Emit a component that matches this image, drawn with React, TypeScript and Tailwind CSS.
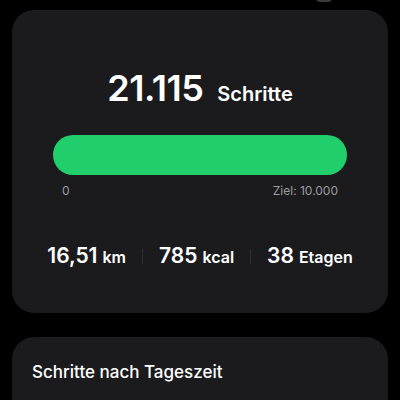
export default function App() {
  return (
    <div
      className="w-[400px] h-[400px] overflow-hidden bg-black px-3 relative"
      style={{ fontFamily: 'Inter, "Noto Sans", sans-serif' }}
    >
      {/* remnant of element above, cut off */}
      <div className="absolute top-[-6px] left-[316px] w-[16px] h-[8px] rounded-full bg-[#3a3a3e]" />

      {/* Steps card */}
      <div className="mt-[10px] h-[303px] rounded-[22px] bg-[#1b1b1e] flex flex-col">
        <div className="mt-[60px] flex items-baseline justify-center gap-[14px] text-white">
          <span className="text-[36px] leading-[36px] font-semibold tracking-[-0.5px]">21.115</span>
          <span className="text-[20px] leading-[24px] font-semibold">Schritte</span>
        </div>

        <div className="mx-[41px] mt-[29px] h-[40px] rounded-full bg-[#20cf6c]" />
        <div className="mx-[50px] mt-[9px] flex justify-between text-[12px] leading-[14px] text-[#9b9b9f]">
          <span>0</span>
          <span>Ziel: 10.000</span>
        </div>

        <div className="mt-[46px] flex items-center justify-center text-white">
          <div className="flex items-baseline gap-[5px]">
            <span className="text-[21px] leading-[24px] font-semibold">16,51</span>
            <span className="text-[16px] leading-[20px] font-semibold">km</span>
          </div>
          <div className="mx-[16px] w-px h-[15px] bg-[#303035]" />
          <div className="flex items-baseline gap-[5px]">
            <span className="text-[21px] leading-[24px] font-semibold">785</span>
            <span className="text-[16px] leading-[20px] font-semibold">kcal</span>
          </div>
          <div className="mx-[16px] w-px h-[15px] bg-[#303035]" />
          <div className="flex items-baseline gap-[5px]">
            <span className="text-[21px] leading-[24px] font-semibold">38</span>
            <span className="text-[16px] leading-[20px] font-semibold">Etagen</span>
          </div>
        </div>
      </div>

      {/* Steps by time of day */}
      <div className="mt-[24px] h-[120px] rounded-[22px] bg-[#1b1b1e] px-[20px] pt-[24px]">
        <h2 className="text-[17px] leading-[22px] font-medium text-white">Schritte nach Tageszeit</h2>
      </div>
    </div>
  );
}
